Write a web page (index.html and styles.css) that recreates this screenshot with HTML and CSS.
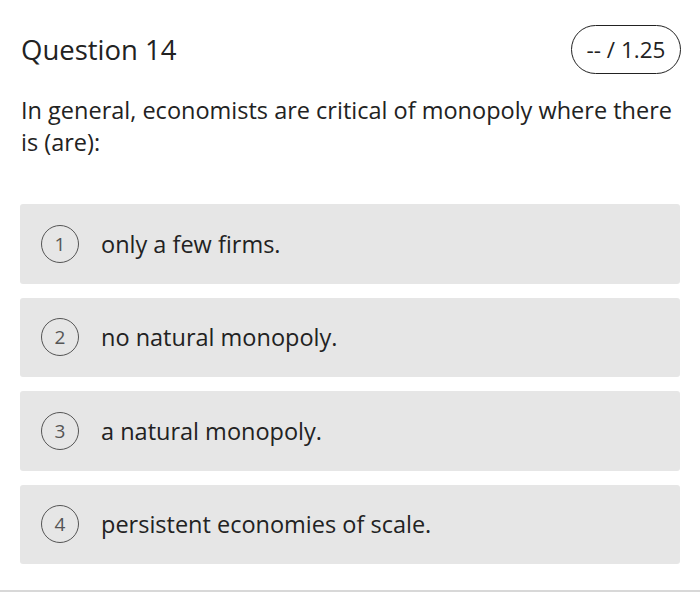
FILE: index.html
```html
<!DOCTYPE html>
<html lang="en">
<head>
<meta charset="utf-8">
<title>Question 14</title>
<link rel="stylesheet" href="styles.css">
</head>
<body>
<div class="page">
  <div class="header">
    <h1 class="title">Question 14</h1>
    <div class="score">-- / 1.25</div>
  </div>
  <p class="question">In general, economists are critical of monopoly where there is (are):</p>
  <div class="options">
    <div class="option"><span class="num">1</span><span class="label">only a few firms.</span></div>
    <div class="option"><span class="num">2</span><span class="label">no natural monopoly.</span></div>
    <div class="option"><span class="num">3</span><span class="label">a natural monopoly.</span></div>
    <div class="option"><span class="num">4</span><span class="label">persistent economies of scale.</span></div>
  </div>
</div>
<div class="rule"></div>
</body>
</html>
```
FILE: styles.css
```css
html, body {
  margin: 0;
  padding: 0;
  background: #ffffff;
}
body {
  font-family: "Open Sans", "Liberation Sans", sans-serif;
  color: #222222;
  width: 700px;
  height: 593px;
  overflow: hidden;
}
.page {
  padding: 25px 20px 0 20px;
  height: 566px;
  box-sizing: border-box;
}
.header {
  display: flex;
  justify-content: space-between;
  align-items: center;
  height: 48px;
}
.title {
  margin: 0 0 0 1px;
  font-size: 27.5px;
  font-weight: 400;
  letter-spacing: 0;
}
.score {
  box-sizing: border-box;
  height: 49px;
  width: 110px;
  border: 1.5px solid #222;
  border-radius: 25px;
  display: flex;
  align-items: center;
  justify-content: center;
  font-size: 22.5px;
  margin-right: -1px;
}
.question {
  margin: 21px 0 0 1px;
  font-size: 23.5px;
  line-height: 32px;
  letter-spacing: 0;
}
.options {
  margin-top: 46px;
  display: flex;
  flex-direction: column;
  gap: 14px;
}
.option {
  height: 79.5px;
  background: #e6e6e6;
  border-radius: 3px;
  display: flex;
  align-items: center;
  padding-left: 21px;
  box-sizing: border-box;
}
.num {
  width: 38px;
  height: 38px;
  box-sizing: border-box;
  border: 1.5px solid #555;
  border-radius: 50%;
  display: flex;
  align-items: center;
  justify-content: center;
  font-size: 19px;
  color: #555;
  flex: none;
}
.label {
  margin-left: 22px;
  font-size: 23.5px;
  letter-spacing: 0;
}
.rule {
  height: 2px;
  background: #d8d8d8;
  margin-top: 24px;
}
```
